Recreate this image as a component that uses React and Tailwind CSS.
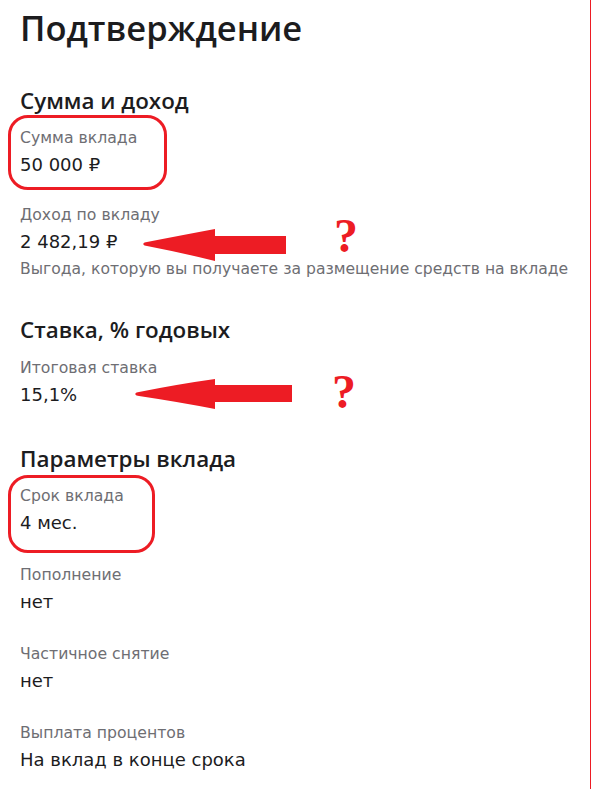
const Field = ({ label, value, note }) => (
  <div className="flex flex-col">
    <div className="text-[15.7px] leading-[22px] text-[#6e6e73] whitespace-nowrap">{label}</div>
    <div className="mt-[3px] text-[18px] leading-[26px] text-[#1c1c1e] whitespace-nowrap">{value}</div>
    {note && (
      <div className="mt-[3px] text-[15.6px] leading-[22px] text-[#6e6e73] whitespace-nowrap">{note}</div>
    )}
  </div>
);

const Heading = ({ children, className }) => (
  <h2
    className={`text-[22.4px] leading-[28px] font-semibold text-[#1c1c1e] ${className}`}
    style={{ fontFamily: '"Open Sans", sans-serif' }}
  >
    {children}
  </h2>
);

// red annotation arrows pointing left
const ArrowOne = () => (
  <svg className="absolute left-[143px] top-[229px] w-[143px] h-[32px]" viewBox="0 0 143 32">
    <path d="M0,15 Q1,13 4,13 Q40,6 72,0 L72,7 L143,7 L143,25 L72,25 L72,32 Q40,24 4,17 Q1,17 0,15 Z" fill="#ed1c24" />
  </svg>
);

const ArrowTwo = () => (
  <svg className="absolute left-[135px] top-[379px] w-[157px] h-[30px]" viewBox="0 0 157 30">
    <path d="M0,15 Q1,13 4,13 Q44,5 80,0 L80,6 L157,6 L157,23 L80,23 L80,30 Q44,23 4,17 Q1,17 0,15 Z" fill="#ed1c24" />
  </svg>
);

const Ask = ({ className }) => (
  <span
    className={`absolute font-bold text-[#ed1c24] leading-none ${className}`}
    style={{ fontFamily: '"Liberation Serif", serif' }}
  >
    ?
  </span>
);

const App = () => {
  return (
    <div
      className="relative w-[591px] h-[789px] overflow-hidden bg-white border-r border-[#ed1c24] px-5 select-none"
      style={{ fontFamily: '"DejaVu Sans", sans-serif' }}
    >
      <h1
        className="pt-[6px] text-[34.5px] leading-[44px] font-semibold text-[#1c1c1e]"
        style={{ fontFamily: '"Open Sans", sans-serif' }}
      >
        Подтверждение
      </h1>

      {/* Сумма и доход */}
      <Heading className="mt-[37px]">Сумма и доход</Heading>
      <div className="mt-[12px] flex flex-col gap-[26px]">
        <Field label="Сумма вклада" value="50 000 ₽" />
        <Field
          label="Доход по вкладу"
          value="2 482,19 ₽"
          note="Выгода, которую вы получаете за размещение средств на вкладе"
        />
      </div>

      {/* Ставка */}
      <Heading className="mt-[36px]">Ставка, % годовых</Heading>
      <div className="mt-[13px] flex flex-col">
        <Field label="Итоговая ставка" value="15,1%" />
      </div>

      {/* Параметры вклада */}
      <Heading className="mt-[37px]">Параметры вклада</Heading>
      <div className="mt-[12px] flex flex-col gap-[28px]">
        <Field label="Срок вклада" value="4 мес." />
        <Field label="Пополнение" value="нет" />
        <Field label="Частичное снятие" value="нет" />
        <Field label="Выплата процентов" value="На вклад в конце срока" />
      </div>

      {/* annotations drawn over the page */}
      <div className="absolute left-[8px] top-[115px] w-[159px] h-[75px] border-[3px] border-[#ed1c24] rounded-[20px]" />
      <div className="absolute left-[8px] top-[475px] w-[147px] h-[78px] border-[3px] border-[#ed1c24] rounded-[20px]" />
      <ArrowOne />
      <ArrowTwo />
      <Ask className="left-[334px] top-[212px] text-[48px]" />
      <Ask className="left-[332px] top-[368px] text-[48px]" />
    </div>
  );
};

export default App;
